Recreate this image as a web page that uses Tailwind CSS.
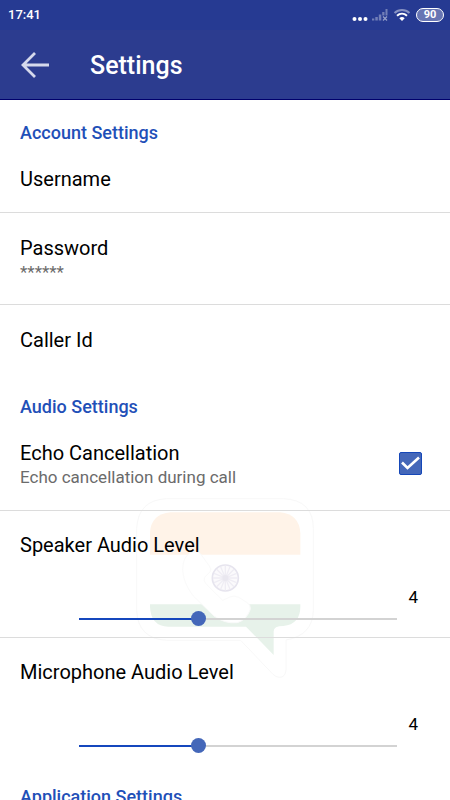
<!DOCTYPE html>
<html lang="en">
  <head>
    <meta charset="UTF-8" />
    <meta name="viewport" content="width=device-width, initial-scale=1.0" />
    <title>Settings</title>
    <script src="https://cdn.jsdelivr.net/npm/@tailwindcss/browser@4"></script>
  </head>
  <body class="h-screen overflow-hidden flex flex-col bg-white text-black font-['Roboto',sans-serif]">
    <!-- Status bar -->
    <div class="flex items-center justify-between h-[30px] shrink-0 pl-2 pr-[6px] bg-[#263a92] text-white">
      <span class="text-[13px] font-medium">17:41</span>
      <div class="flex items-center">
        <svg class="w-4 h-4" viewBox="0 0 16 16" fill="#fff">
          <circle cx="2.5" cy="12" r="2" />
          <circle cx="8" cy="12" r="2" />
          <circle cx="13.5" cy="12" r="2" />
        </svg>
        <svg class="w-4 h-4 ml-1" viewBox="0 0 16 16" fill="#fff" fill-opacity=".35">
          <path d="M0 11.500h2.300v2H0zM3.300 10h2.500v3.500H3.300zM6.800 7.500h2.500v6H6.800zM10.200 5h2.300v3.500h-2.300zM13.500 2h2v6.500h-2z" />
          <path d="M11 9.500l4 4M15 9.500l-4 4" stroke="#fff" stroke-opacity=".5" stroke-width="1.300" />
        </svg>
        <svg class="w-[18px] h-4 ml-[5px]" viewBox="0 0 18 16" fill="none" stroke="#fff" stroke-width="2">
          <path d="M1.500 6c4.300-4 10.700-4 15 0" stroke-opacity=".45" />
          <path d="M4 8.800c3-2.700 7-2.700 10 0" />
          <path d="M6.300 11.200c1.700-1.500 3.700-1.500 5.400 0L9 14z" fill="#fff" stroke="none" />
        </svg>
        <span class="flex items-center justify-center w-7 h-[14px] ml-[5px] border border-white rounded-full bg-white/30 text-[11px] leading-[12px] font-bold">90</span>
      </div>
    </div>

    <!-- Title bar -->
    <header class="flex items-center h-[70px] shrink-0 pt-[2px] pl-5 bg-[#2c3c8f] border-b border-[#00006c] text-white">
      <button type="button" aria-label="Back" class="w-[30px] h-[30px]">
        <svg class="w-[30px] h-[30px]" viewBox="0 0 30 30" fill="none" stroke="#d5d9ec" stroke-width="2.800">
          <path d="M29 14H3M15 2L3 14l12 12" />
        </svg>
      </button>
      <h1 class="ml-10 text-[25px] leading-[30px] font-medium">Settings</h1>
    </header>

    <main class="relative isolate flex-1 overflow-y-auto [scrollbar-width:none]">
      <!-- Watermark -->
      <svg class="absolute -z-10 top-[390px] left-1/2 -translate-x-1/2 w-[190px] h-[190px]" viewBox="0 0 570 570" fill="none">
        <path d="M110 26H460Q550 30 550 116V362Q548 436 468 450V540Q466 562 448 562Q438 562 428 552L332 451H110Q24 446 20 362V116Q24 30 110 26Z" fill="#fff" stroke="#f8f8f8" stroke-width="3" />
        <path d="M60 194V130Q62 72 122 67H450Q508 72 511 130V194Z" fill="#fff3e8" />
        <path d="M60 343H511V350Q511 402 460 408Q431 408 431 424V495L348 410H115Q62 408 60 350Z" fill="#e7f2ea" />
        <path d="M182 188Q158 200 158 240Q160 280 190 318L252 378Q284 402 322 398Q350 390 361 358Q362 344 352 338L326 322Q312 316 302 320L278 331L230 284Q218 272 224 262L240 246Q246 238 238 228L212 192Q200 180 182 188Z" fill="#fff" stroke="#fafafa" stroke-width="3" />
        <circle cx="286" cy="264" r="39" fill="#fbfafc" stroke="#e6e4ee" stroke-width="5" />
        <path d="M286 227V301M249 264H323M260 238L312 290M312 238L260 290M272 230L300 298M300 230L272 298M252 250L320 278M320 250L252 278" stroke="#efedf4" stroke-width="4" />
        <circle cx="286" cy="264" r="9" fill="#e9e7ef" />
      </svg>

      <!-- Account -->
      <section>
        <h2 class="px-5 pt-[21px] text-[18px] leading-6 font-medium text-[#1f50b8]">Account Settings</h2>
        <a href="#username" class="block px-5 pt-[22px] pb-[21px] border-b border-[#dcdcdc]">
          <span class="block text-[20px] leading-6">Username</span>
        </a>
        <a href="#password" class="block px-5 pt-[23px] pb-[19px] border-b border-[#dcdcdc]">
          <span class="block text-[20px] leading-6">Password</span>
          <span class="block text-[17px] leading-[25px] text-[#6b6b6b]">******</span>
        </a>
        <a href="#caller-id" class="block px-5 pt-[23px] pb-[19px]">
          <span class="block text-[20px] leading-6">Caller Id</span>
        </a>
      </section>

      <!-- Audio -->
      <section>
        <h2 class="px-5 pt-6 text-[18px] leading-6 font-medium text-[#1f50b8]">Audio Settings</h2>
        <label class="flex items-center justify-between pl-5 pr-7 pt-[22px] pb-5 border-b border-[#dcdcdc]">
          <span>
            <span class="block text-[20px] leading-6">Echo Cancellation</span>
            <span class="block text-[17px] leading-[25px] text-[#6b6b6b]">Echo cancellation during call</span>
          </span>
          <span class="grid shrink-0 pb-1">
            <input type="checkbox" checked class="peer appearance-none col-start-1 row-start-1 w-[23px] h-[23px] rounded-[2px] border border-[#1547b8] checked:bg-[#4467b9]" />
            <svg class="hidden peer-checked:block pointer-events-none col-start-1 row-start-1 w-[23px] h-[23px]" viewBox="0 0 23 23" fill="none" stroke="#fff" stroke-width="2.600">
              <path d="M3 10.500l5.500 5.500L20 5.500" />
            </svg>
          </span>
        </label>
        <div class="px-5 pt-[22px] pb-[11px] border-b border-[#dcdcdc]">
          <label for="speaker" class="block text-[20px] leading-6">Speaker Audio Level</label>
          <output for="speaker" class="block mt-[26px] pr-3 text-right text-[17px] leading-7">4</output>
          <div class="pl-[52px] pr-[26px]">
            <input
              id="speaker"
              type="range"
              min="1"
              max="9"
              value="4"
              style="--fill: 37.5%"
              class="block appearance-none w-full h-[15px] bg-no-repeat bg-center bg-[size:calc(100%-14px)_2px] bg-[image:linear-gradient(to_right,#1547bd_var(--fill),#d3d3d3_var(--fill))] [&::-webkit-slider-thumb]:appearance-none [&::-webkit-slider-thumb]:w-[15px] [&::-webkit-slider-thumb]:h-[15px] [&::-webkit-slider-thumb]:rounded-full [&::-webkit-slider-thumb]:bg-[#4467b9]"
            />
          </div>
        </div>
        <div class="px-5 pt-[22px] pb-[11px]">
          <label for="microphone" class="block text-[20px] leading-6">Microphone Audio Level</label>
          <output for="microphone" class="block mt-[26px] pr-3 text-right text-[17px] leading-7">4</output>
          <div class="pl-[52px] pr-[26px]">
            <input
              id="microphone"
              type="range"
              min="1"
              max="9"
              value="4"
              style="--fill: 37.5%"
              class="block appearance-none w-full h-[15px] bg-no-repeat bg-center bg-[size:calc(100%-14px)_2px] bg-[image:linear-gradient(to_right,#1547bd_var(--fill),#d3d3d3_var(--fill))] [&::-webkit-slider-thumb]:appearance-none [&::-webkit-slider-thumb]:w-[15px] [&::-webkit-slider-thumb]:h-[15px] [&::-webkit-slider-thumb]:rounded-full [&::-webkit-slider-thumb]:bg-[#4467b9]"
            />
          </div>
        </div>
      </section>

      <!-- Application -->
      <section>
        <h2 class="px-5 pt-[21px] text-[18px] leading-6 font-medium text-[#1f50b8]">Application Settings</h2>
      </section>
    </main>

    <script>
      // Keep the filled part and the number in step with the slider
      document.querySelectorAll('input[type="range"]').forEach((slider) => {
        slider.addEventListener("input", () => {
          const percent = ((slider.value - slider.min) / (slider.max - slider.min)) * 100;
          slider.style.setProperty("--fill", percent + "%");
          document.querySelector(`output[for="${slider.id}"]`).textContent = slider.value;
        });
      });
    </script>
  </body>
</html>
